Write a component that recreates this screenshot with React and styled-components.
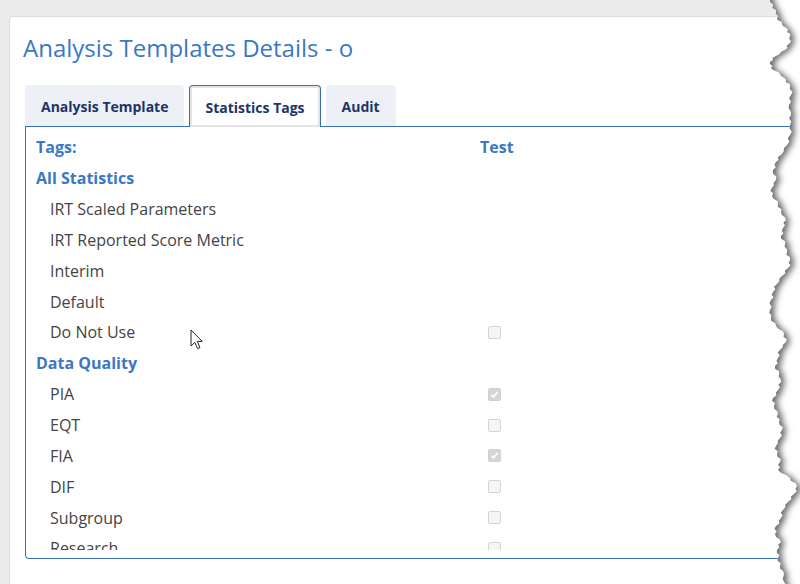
import React from 'react'
import styled, { createGlobalStyle } from 'styled-components'

const GlobalStyle = createGlobalStyle`
  html, body {
    margin: 0;
    padding: 0;
    background: #ececec;
    font-family: "Open Sans", "Liberation Sans", sans-serif;
  }
`

const blue = '#3a78c6'
const navy = '#1c3466'

const Page = styled.div`
  position: relative;
  height: 584px;
  overflow: hidden;
  padding: 16px 0 0 9px;
  box-sizing: border-box;
`

const Card = styled.div`
  width: 840px;
  height: 620px;
  background: #fff;
  border: 1px solid #dcdcdc;
  border-radius: 4px 4px 0 0;
  padding: 14px 0 0 13px;
  box-sizing: border-box;
`

const Title = styled.h1`
  margin: 0;
  font-size: 24px;
  line-height: 34px;
  font-weight: 400;
  color: ${blue};
`

const TabBar = styled.div`
  display: flex;
  gap: 5px;
  margin: 20px 0 0 2px;
  position: relative;
  z-index: 1;
`

const Tab = styled.div`
  box-sizing: border-box;
  padding: ${p => (p.$active ? '1px' : '0')} 15px 0 15px;
  display: flex;
  align-items: center;
  font-size: 14px;
  font-weight: 700;
  color: ${navy};
  border-radius: 4px 4px 0 0;
  background: ${p => (p.$active ? '#fff' : '#edf1f7')};
  border: 1px solid ${p => (p.$active ? '#3a6fb5' : 'transparent')};
  border-bottom: none;
  height: ${p => (p.$active ? '42px' : '41px')};
  margin-bottom: ${p => (p.$active ? '-1px' : '0')};
  box-shadow: ${p => (p.$active ? 'inset 0 0 0 2px #e4e4e4' : 'none')};
`

const Panel = styled.div`
  margin-left: 2px;
  height: 433px;
  box-sizing: border-box;
  border: 1px solid #3572b9;
  border-right: none;
  border-radius: 0 0 0 4px;
  padding: 5px 0 8px 10px;
`

const Scroller = styled.div`
  height: 100%;
  overflow: hidden;
`

const Row = styled.div`
  display: grid;
  grid-template-columns: 444px 40px;
  height: 30.85px;
  align-items: center;
`

const Heading = styled.div`
  font-size: 16px;
  font-weight: 700;
  color: ${blue};
`

const Item = styled.div`
  padding-left: 14px;
  font-size: 16px;
  color: #444;
`

const Box = styled.span`
  display: flex;
  align-items: center;
  justify-content: center;
  width: 13px;
  height: 13px;
  margin-left: 8px;
  box-sizing: border-box;
  border-radius: 2px;
  border: 1px solid ${p => (p.$checked ? '#d0d0d0' : '#d4d4d4')};
  background: ${p => (p.$checked ? '#d6d6d6' : '#f5f5f5')};
`

const Checkbox = ({ checked }) => (
  <Box $checked={checked}>
    {checked && (
      <svg width="9" height="9" viewBox="0 0 9 9">
        <path d="M1.5 4.8 L3.6 6.8 L7.6 2" fill="none" stroke="#fff" strokeWidth="1.8" />
      </svg>
    )}
  </Box>
)

const rows = [
  { head: 'All Statistics' },
  { label: 'IRT Scaled Parameters' },
  { label: 'IRT Reported Score Metric' },
  { label: 'Interim' },
  { label: 'Default' },
  { label: 'Do Not Use', box: true },
  { head: 'Data Quality' },
  { label: 'PIA', box: true, checked: true },
  { label: 'EQT', box: true },
  { label: 'FIA', box: true, checked: true },
  { label: 'DIF', box: true },
  { label: 'Subgroup', box: true },
  { label: 'Research', box: true }
]

const Cursor = styled.svg`
  position: absolute;
  left: 190px;
  top: 329px;
  pointer-events: none;
`

const Torn = styled.svg`
  position: absolute;
  top: 0;
  right: 0;
  pointer-events: none;
`

// edge of the torn page: [y, x] in page coordinates
const edge = [
  [0, 770], [6, 773], [12, 776], [18, 777], [24, 782], [30, 788], [36, 790],
  [44, 789], [50, 785], [56, 776], [62, 770], [68, 771], [74, 780], [80, 786],
  [86, 790], [95, 791], [105, 789], [115, 791], [125, 790], [135, 790],
  [145, 787], [155, 781], [162, 776], [170, 773], [180, 776], [188, 772],
  [196, 772], [204, 778], [212, 781], [220, 786], [228, 783], [236, 781],
  [244, 785], [252, 787], [260, 790], [268, 788], [276, 782], [284, 777],
  [292, 773], [300, 771], [310, 770], [318, 771], [326, 776], [334, 784],
  [342, 786], [350, 780], [358, 778], [366, 775], [374, 779], [382, 781],
  [390, 778], [398, 773], [406, 774], [414, 778], [422, 779], [430, 782],
  [438, 780], [446, 776], [454, 777], [462, 780], [470, 778], [478, 790],
  [486, 797], [494, 794], [502, 788], [510, 783], [518, 781], [526, 776],
  [534, 775], [542, 781], [550, 777], [558, 778], [566, 780], [574, 784],
  [590, 785]
]

const jitter = [1.4, -1, 0.6, -1.6, 1, -0.5, 1.8, -1.2]
const OX = 740

const edgePoints = () => {
  const pts = []
  edge.forEach(([y, x], i) => {
    pts.push([x - OX, y])
    const next = edge[i + 1]
    if (!next) return
    for (let k = 1; k < 3; k++) {
      const t = k / 3
      const j = jitter[(i * 2 + k) % jitter.length]
      pts.push([x + (next[1] - x) * t + j - OX, y + (next[0] - y) * t])
    }
  })
  return pts.map(([x, y]) => `${x.toFixed(1)},${y.toFixed(1)}`).join(' L ')
}

const line = edgePoints()
const rightShape = `M 60,-10 L ${edge[0][1] - OX},-10 L ${line} L 60,600 Z`
const leftShape = `M -20,-10 L ${edge[0][1] - OX},-10 L ${line} L -20,600 Z`

const TornEdge = () => (
  <Torn width="60" height="584" viewBox="0 0 60 584">
    <defs>
      <clipPath id="right-side">
        <path d={rightShape} />
      </clipPath>
      <filter id="soft" x="-1" y="-0.1" width="3" height="1.2">
        <feGaussianBlur stdDeviation="3" />
      </filter>
    </defs>
    <path d={rightShape} fill="#fff" />
    <g clipPath="url(#right-side)">
      <path d={leftShape} fill="#6a6a6a" filter="url(#soft)" transform="translate(4 1)" />
    </g>
  </Torn>
)

const App = () => (
  <>
    <GlobalStyle />
    <Page>
      <Card>
        <Title>Analysis Templates Details - o</Title>
        <TabBar>
          <Tab>Analysis Template</Tab>
          <Tab $active>Statistics Tags</Tab>
          <Tab>Audit</Tab>
        </TabBar>
        <Panel>
          <Scroller>
            <Row>
              <Heading>Tags:</Heading>
              <Heading>Test</Heading>
            </Row>
            {rows.map((r, i) => (
              <Row key={i}>
                {r.head ? <Heading>{r.head}</Heading> : <Item>{r.label}</Item>}
                {r.box ? <Checkbox checked={r.checked} /> : <span />}
              </Row>
            ))}
          </Scroller>
        </Panel>
      </Card>
      <Cursor width="14" height="22" viewBox="0 0 14 22">
        <path
          d="M1 1 L1 17 L4.8 13.4 L7.6 19.6 L10 18.6 L7.3 12.4 L12.2 12.4 Z"
          fill="#fff"
          stroke="#222"
          strokeWidth="1"
          strokeLinejoin="round"
        />
      </Cursor>
      <TornEdge />
    </Page>
  </>
)

export default App
